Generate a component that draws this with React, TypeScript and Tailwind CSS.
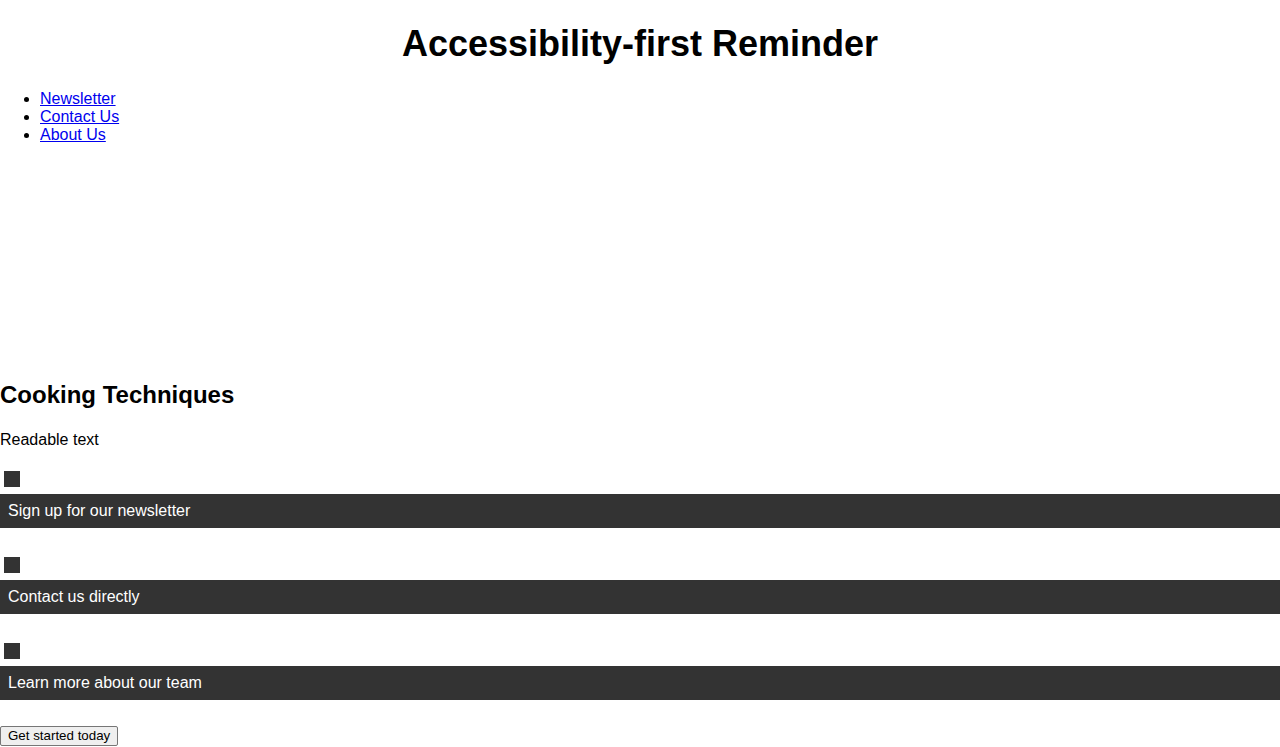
const links = [
  { label: "Newsletter", href: "#newsletter" },
  { label: "Contact Us", href: "#contact" },
  { label: "About Us", href: "#about" },
];

const blocks = [
  "Sign up for our newsletter",
  "Contact us directly",
  "Learn more about our team",
];

export default function App() {
  return (
    <div className="min-h-[747px] bg-white text-black font-['Liberation_Sans',Arial,sans-serif] text-[16px] leading-[18px]">
      <header className="pt-[23px]">
        <h1 className="text-center text-[36px] leading-[42px] font-bold">Accessibility-first Reminder</h1>
        <nav className="mt-[25px] h-[291px]">
          <ul className="list-disc pl-[40px]">
            {links.map((l) => (
              <li key={l.label}>
                <a href={l.href} className="text-[#0000ee] underline">
                  {l.label}
                </a>
              </li>
            ))}
          </ul>
        </nav>
      </header>

      <main>
        <h2 className="text-[24px] leading-[28px] font-bold">Cooking Techniques</h2>
        <p className="mt-[22px]">Readable text</p>
        <div className="mt-[22px] flex flex-col gap-[29px]">
          {blocks.map((b) => (
            <section key={b}>
              <div className="ml-[4px] size-[16px] bg-[#333333]" />
              <div className="mt-[7px] bg-[#333333] p-[8px] text-white">{b}</div>
            </section>
          ))}
        </div>
        <button className="mt-[26px] rounded-[2px] border border-[#767676] bg-[#efefef] px-[7px] py-[1px] text-[13.333px] leading-[16px] text-black">
          Get started today
        </button>
      </main>
    </div>
  );
}
